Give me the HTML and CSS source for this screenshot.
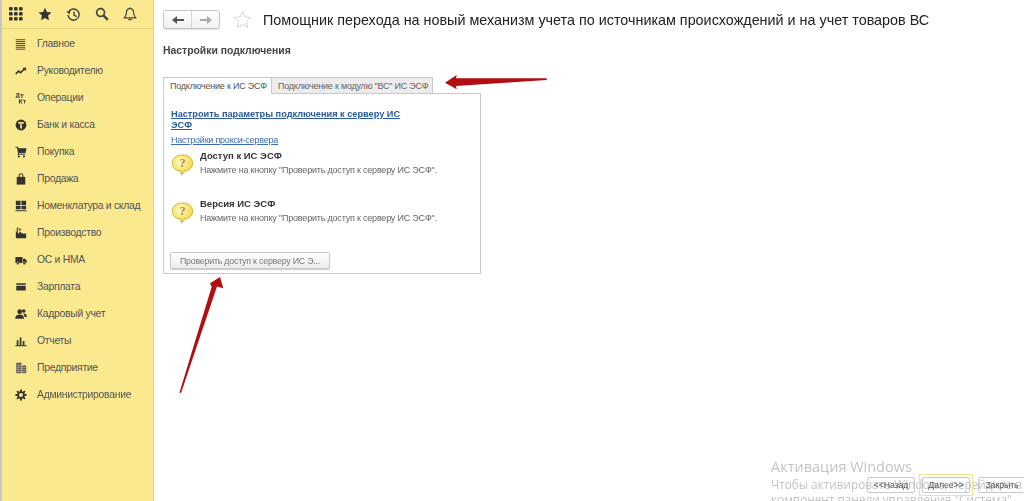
FILE: index.html
```html
<!DOCTYPE html>
<html lang="ru">
<head>
<meta charset="utf-8">
<title>Помощник перехода</title>
<link rel="stylesheet" href="styles.css">
</head>
<body>
<div class="app">
  <aside class="sidebar">
    <div class="topbar">
      <svg class="ti" width="16" height="16" viewBox="0 0 16 16"><g fill="#333"><rect x="1" y="1" width="3.6" height="3.6" rx="1.2"/><rect x="6" y="1" width="3.6" height="3.6" rx="1.2"/><rect x="11" y="1" width="3.6" height="3.6" rx="1.2"/><rect x="1" y="6" width="3.6" height="3.6" rx="1.2"/><rect x="6" y="6" width="3.6" height="3.6" rx="1.2"/><rect x="11" y="6" width="3.6" height="3.6" rx="1.2"/><rect x="1" y="11" width="3.6" height="3.6" rx="1.2"/><rect x="6" y="11" width="3.6" height="3.6" rx="1.2"/><rect x="11" y="11" width="3.6" height="3.6" rx="1.2"/></g></svg>
      <svg class="ti" width="14" height="14" viewBox="0 0 14 14"><path fill="#333" d="M7 .8l1.900 4.200 4.600.5-3.400 3.100.9 4.600L7 10.900l-4 2.300.9-4.600L.5 5.500l4.600-.5z"/></svg>
      <svg class="ti" width="15" height="15" viewBox="0 0 15 15"><path fill="none" stroke="#444" stroke-width="1.400" d="M2.600 5A5.600 5.600 0 1 1 2 8M8 4.400V8l2.600 1.600"/><path fill="#444" d="M.3 4.400L4.600 3.800 3.400 7.600z"/></svg>
      <svg class="ti" width="14" height="14" viewBox="0 0 14 14"><circle cx="5.600" cy="5.600" r="3.900" fill="none" stroke="#444" stroke-width="1.700"/><path stroke="#444" stroke-width="2.400" d="M8.600 8.600l4.200 4.200"/></svg>
      <svg class="ti" width="14" height="15" viewBox="0 0 14 15"><path fill="none" stroke="#444" stroke-width="1.200" d="M7 1.600c2.600 0 3.600 2 3.600 4.200 0 2.600 1.100 3.800 2 5H1.400c.9-1.200 2-2.400 2-5C3.400 3.600 4.400 1.600 7 1.600z"/><path fill="#444" d="M5 12h4c0 1.800-4 1.800-4 0zM6.300.4h1.400v1.600H6.300z"/></svg>
    </div>
    <nav class="nav">
      <a class="item"><svg width="14" height="14" viewBox="0 0 14 14"><path stroke="#444" stroke-width="1.100" d="M1 2h11M1 4.200h11M1 6.400h11M1 8.600h11M1 10.800h11M1 13h11"/></svg><span>Главное</span></a>
      <a class="item"><svg width="14" height="14" viewBox="0 0 14 14"><path fill="none" stroke="#333" stroke-width="1.900" d="M.8 10.500l3.400-3.300 2.300 1.800 4-4"/><path fill="#333" d="M8.600 3.500l4.600-.6-.7 4.500z"/></svg><span>Руководителю</span></a>
      <a class="item"><svg width="14" height="14" viewBox="0 0 14 14"><g fill="#333"><path d="M1.500 1.500h4v.9h-.6v3.100h.9v1.600h-.9V6.300H1.700v.8H.8V5.500h.6c.5-1 .6-2.400.6-3.100h-.5zM3 2.400c0 1-.1 2.200-.5 3.100h1.400V2.400z"/><path d="M6.200 2.700h3.800v1h-1.400v3.200H7.600V3.700H6.200z"/><path d="M4.600 8.500h1.200v2.100l1.800-2.100H9L7 10.700l2.100 2.700H7.700l-1.900-2.500v2.500H4.600z"/><path d="M9.400 9.700h3.400v.9h-1.200v2.800h-1v-2.800H9.400z"/></g></svg><span>Операции</span></a>
      <a class="item"><svg width="14" height="14" viewBox="0 0 14 14"><circle cx="7" cy="7" r="6.300" fill="#333"/><path fill="#fbe98f" d="M3.800 3.600h6.400v1.800H3.800zM6 6.200h2v5H6z"/></svg><span>Банк и касса</span></a>
      <a class="item"><svg width="14" height="14" viewBox="0 0 14 14"><path fill="#333" d="M.5 1h3l.5 1.600h9.500l-1.300 5.900H4.600l-.3 1h7.500v1H3l.5-2.200L2.300 2H.5z"/><circle cx="4.500" cy="12.300" r="1.200" fill="#333"/><circle cx="10.500" cy="12.300" r="1.200" fill="#333"/></svg><span>Покупка</span></a>
      <a class="item"><svg width="14" height="14" viewBox="0 0 14 14"><path fill="#333" d="M2 4.500h10v9H2z"/><path fill="none" stroke="#333" stroke-width="1.200" d="M4.800 6V3a2.200 2.200 0 0 1 4.400 0v3"/></svg><span>Продажа</span></a>
      <a class="item"><svg width="14" height="14" viewBox="0 0 14 14"><path fill="#333" d="M1 1h5.500v4.700H1zM7.500 1H13v4.700H7.500zM1 6.600h5.500v4.200H1zM7.500 6.600H13v4.200H7.500zM.5 12h13v1.200H.5z"/></svg><span>Номенклатура и склад</span></a>
      <a class="item"><svg width="14" height="14" viewBox="0 0 14 14"><path fill="#333" d="M1 13V5l4 3V5l4 3 4-.5V13z"/><path fill="#333" d="M2 1h2v2H2zM5 2h2v2H5zM2 3.500h1.500v2H2z"/></svg><span>Производство</span></a>
      <a class="item"><svg width="14" height="14" viewBox="0 0 14 14"><path fill="#333" d="M.5 3.500h8.200v7H.5zM9.400 5.500h2.500l1.800 2.400v2.600H9.400z"/><circle cx="3.400" cy="11" r="1.500" fill="#333" stroke="#fbe98f" stroke-width=".6"/><circle cx="10.800" cy="11" r="1.500" fill="#333" stroke="#fbe98f" stroke-width=".6"/></svg><span>ОС и НМА</span></a>
      <a class="item"><svg width="14" height="14" viewBox="0 0 14 14"><path fill="#333" d="M1.500 2.500h11v2h-11zM1.500 5.500h11v5.500h-11z"/></svg><span>Зарплата</span></a>
      <a class="item"><svg width="14" height="14" viewBox="0 0 14 14"><circle cx="5.500" cy="4.300" r="2.800" fill="#333"/><path fill="#333" d="M.3 12.500c0-3.500 2-5 5.200-5s5 1.500 5 5z"/><circle cx="10.200" cy="3.500" r="2.100" fill="#333"/><path fill="#333" d="M9.500 6.500c2.500-.3 4.300 1 4.300 4h-2.500c-.3-1.600-.9-3-1.800-4z"/></svg><span>Кадровый учет</span></a>
      <a class="item"><svg width="14" height="14" viewBox="0 0 14 14"><path fill="#333" d="M2 6h2v6H2zM5.500 3h2v9h-2zM9 7h2v5H9zM.5 12h13v1H.5z"/></svg><span>Отчеты</span></a>
      <a class="item"><svg width="14" height="14" viewBox="0 0 14 14"><path fill="#555" d="M1.500 1h6v12h-6zM8.500 4h4.500v9H8.500z"/><path stroke="#fbe98f" stroke-width=".8" d="M2.500 3.500h4M2.500 6h4M2.500 8.500h4M2.500 11h4M9.500 6.500h2.500M9.500 9h2.500M9.500 11.500h2.500"/></svg><span>Предприятие</span></a>
      <a class="item"><svg width="14" height="14" viewBox="0 0 14 14"><circle cx="7" cy="7" r="3.400" fill="none" stroke="#333" stroke-width="2"/><path stroke="#333" stroke-width="2.200" d="M7 .5v2.600M7 10.900v2.600M.5 7h2.600M10.900 7h2.600M2.400 2.400l1.800 1.800M9.800 9.800l1.800 1.800M2.400 11.600l1.800-1.800M9.800 4.200l1.800-1.800"/></svg><span>Администрирование</span></a>
    </nav>
  </aside>
  <main class="main">
    <header class="head">
      <div class="navbtns">
        <span class="nb"><svg width="12" height="10" viewBox="0 0 12 10"><path fill="#555" d="M0 5l5-4v3h7v2H5v3z"/></svg></span>
        <span class="nb"><svg width="12" height="10" viewBox="0 0 12 10"><path fill="#aaa" d="M12 5L7 1v3H0v2h7v3z"/></svg></span>
      </div>
      <svg class="star" width="19" height="19" viewBox="0 0 19 19"><path fill="#fff" stroke="#d4d4d4" d="M9.500 1.300l2.400 5.600 6 .6-4.500 4 1.300 5.900-5.200-3.100-5.200 3.100 1.300-5.900-4.500-4 6-.6z"/></svg>
      <h1 class="title">Помощник перехода на новый механизм учета по источникам происхождений и на учет товаров ВС</h1>
    </header>
    <h2 class="section">Настройки подключения</h2>
    <div class="tabset">
      <div class="tabs">
        <div class="tab active">Подключение к ИС ЭСФ</div>
        <div class="tab">Подключение к модулю "ВС" ИС ЭСФ</div>
      </div>
      <div class="panel">
        <a class="link-main">Настроить параметры подключения к серверу ИС ЭСФ</a>
        <a class="link-proxy">Настройки прокси-сервера</a>
        <div class="info first">
          <svg width="23" height="22" viewBox="0 0 26 25" preserveAspectRatio="none"><defs><radialGradient id="b" cx=".4" cy=".35" r=".7"><stop offset="0" stop-color="#fffbd0"/><stop offset="1" stop-color="#f3d230"/></radialGradient></defs><path fill="url(#b)" stroke="#c9a81e" d="M13 1c6.500 0 11.500 3.800 11.500 9.300 0 5-4 8.700-9.500 9.200l-3 4.500-1-4.700C5 19.300 1.500 15.500 1.500 10.300 1.500 4.800 6.500 1 13 1z"/><text x="13" y="15" class="q">?</text></svg>
          <div class="info-text"><b>Доступ к ИС ЭСФ</b><p>Нажмите на кнопку "Проверить доступ к серверу ИС ЭСФ".</p></div>
        </div>
        <div class="info second">
          <svg width="23" height="22" viewBox="0 0 26 25" preserveAspectRatio="none"><path fill="url(#b)" stroke="#c9a81e" d="M13 1c6.500 0 11.500 3.800 11.500 9.300 0 5-4 8.700-9.500 9.200l-3 4.500-1-4.700C5 19.300 1.500 15.500 1.500 10.300 1.500 4.800 6.500 1 13 1z"/><text x="13" y="15" class="q">?</text></svg>
          <div class="info-text"><b>Версия ИС ЭСФ</b><p>Нажмите на кнопку "Проверить доступ к серверу ИС ЭСФ".</p></div>
        </div>
        <button class="check">Проверить доступ к серверу ИС Э...</button>
      </div>
    </div>
  </main>
</div>
<svg class="arrow arrow-h" width="105" height="20" viewBox="0 0 105 20"><path fill="#b30d12" d="M1 9.700L12.700 2 12 5.300 102.700 5.300V7L12 13 12.700 16.300z"/></svg>
<svg class="arrow arrow-v" width="50" height="120" viewBox="0 0 50 120"><path fill="#b30d12" d="M42 2L45.300 13.300 39 11.500 3 118 1.500 117.500 33.700 11.700 32 8.300z"/></svg>
<div class="watermark"><div class="wm-title">Активация Windows</div><div>Чтобы активировать Windows, перейдите в</div><div>компонент панели управления "Система".</div></div>
<div class="footer">
  <button class="fb">&lt;&lt;Назад</button>
  <span class="default-ring"><button class="fb">Далее&gt;&gt;</button></span>
  <button class="fb last">Закрыть</button>
</div>
</body>
</html>
```
FILE: styles.css
```css
* { box-sizing: border-box; }
html, body { margin: 0; height: 100%; overflow: hidden; }
body { font-family: "Liberation Sans", Arial, sans-serif; color: #333; background: #fff; position: relative; }
.app { display: flex; height: 501px; filter: blur(.3px); }
.sidebar { width: 154px; flex: none; background: #fbe98f; border-left: 2px solid #c6c6c6; border-right: 1px solid #e3d27e; }
.topbar { height: 29px; display: flex; align-items: center; gap: 14px; padding: 0 0 0 6px; border-bottom: 1px solid #e6d57f; }
.nav { display: flex; flex-direction: column; padding-top: 1px; }
.item { height: 27px; display: flex; align-items: center; gap: 10px; padding-left: 13px; font-size: 10.400px; letter-spacing: -.29px; color: #555; }
.item svg { flex: none; width: 12px; height: 12px; overflow: visible; }
.main { flex: 1; padding-left: 9px; min-width: 0; }
.head { display: flex; align-items: center; height: 38px; padding-top: 1px; }
.navbtns { display: flex; width: 57px; height: 19px; border: 1px solid #c5c5c5; border-radius: 3px; background: linear-gradient(#fff, #f0f0f0); box-shadow: 0 1px 1px #ddd; }
.nb { flex: 1; display: flex; align-items: center; justify-content: center; }
.nb + .nb { border-left: 1px solid #d4d4d4; }
.star { margin-left: 13px; flex: none; }
.title { margin: 0 0 0 11px; font-size: 14.370px; font-weight: 400; color: #222; white-space: nowrap; }
.section { margin: 7px 0 0; font-size: 10.400px; font-weight: 700; color: #444; line-height: 12px; }
.tabset { margin-top: 20px; width: 318px; }
.tabs { display: flex; height: 17px; position: relative; z-index: 1; }
.tab { font-size: 9px; letter-spacing: -.22px; color: #666; padding: 0 6px; line-height: 16px; background: #ececec; border: 1px solid #c8c8c8; border-left: 0; white-space: nowrap; height: 17px; width: 161px; }
.tab.active { background: #fff; border-left: 1px solid #c8c8c8; border-bottom: 1px solid #fff; color: #555; width: 109px; }
.panel { height: 181px; border: 1px solid #c8c8c8; margin-top: -1px; padding: 15px 6px 0 7px; display: flex; flex-direction: column; }
.link-main { display: block; width: 240px; font-size: 9.200px; font-weight: 700; line-height: 10.500px; color: #2a5aa0; text-decoration: underline; }
.link-proxy { display: block; margin-top: 5px; font-size: 9px; letter-spacing: -.22px; line-height: 11px; color: #3a6cb0; text-decoration: underline; }
.info { display: flex; gap: 6px; }
.info svg { flex: none; margin-top: 3.500px; overflow: visible; }
.info.first { margin-top: 4px; }
.info.second { margin-top: 22px; }
.q { font-family: "Liberation Serif", serif; font-size: 14px; font-weight: 700; fill: #b0902a; text-anchor: middle; }
.info-text b { display: block; font-size: 9.500px; line-height: 11px; color: #333; }
.info-text p { margin: 4px 0 0; font-size: 9px; letter-spacing: -.2px; line-height: 11px; color: #666; white-space: nowrap; }
.check { margin: 28px 0 0 -1px; width: 160px; height: 17px; padding: 0; font: 8.800px "Liberation Sans", Arial, sans-serif; letter-spacing: -.2px; color: #777; background: linear-gradient(#fff, #ececec); border: 1px solid #c8c8c8; border-radius: 2px; box-shadow: 0 1px 1px #ccc; }
.arrow { position: absolute; }
.arrow-h { left: 444px; top: 73px; }
.arrow-v { left: 178px; top: 275px; }
.watermark { position: absolute; left: 771px; top: 459px; width: 253px; height: 42px; overflow: hidden; font-family: "Open Sans", "Liberation Sans", sans-serif; font-size: 11.800px; line-height: 15px; color: #c4c4c4; white-space: nowrap; }
.wm-title { font-size: 14.500px; line-height: 16px; margin-bottom: 2px; }
.footer { position: absolute; left: 867px; top: 477px; display: flex; align-items: center; gap: 4px; }
.fb { width: 48px; height: 16px; padding: 0; font: 8.800px "Liberation Sans", Arial, sans-serif; letter-spacing: -.1px; color: #555; background: transparent; border: 1px solid #c8c8c8; border-radius: 2px; flex: none; }
.default-ring { display: flex; padding: 2px; border: 1px solid #efe48e; margin: -3px 0; flex: none; }
.fb.last { margin-left: 1px; }
```
